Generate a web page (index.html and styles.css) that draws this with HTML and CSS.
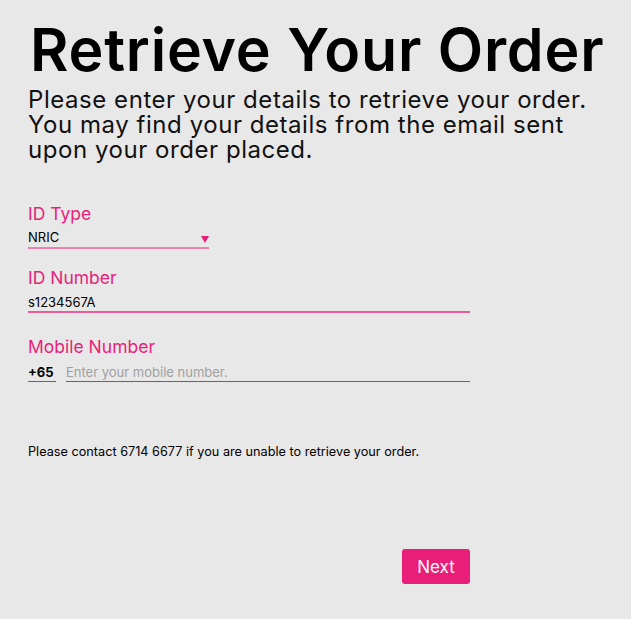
FILE: index.html
```html
<!DOCTYPE html>
<html lang="en">
<head>
<meta charset="utf-8">
<title>Retrieve Your Order</title>
<link rel="stylesheet" href="styles.css">
</head>
<body>
<main class="page">
  <h1 class="title">Retrieve Your Order</h1>
  <p class="intro">Please enter your details to retrieve your order.<br>You may find your details from the email sent<br>upon your order placed.</p>

  <form class="form">
    <div class="field field-type">
      <label class="label">ID Type</label>
      <div class="select">
        <span class="select-value">NRIC</span>
        <svg class="caret" width="8" height="7" viewBox="0 0 8 7"><path d="M0 0H8L4 7Z" fill="#e91e78"/></svg>
      </div>
    </div>

    <div class="field field-number">
      <label class="label">ID Number</label>
      <div class="input input-strong">s1234567A</div>
    </div>

    <div class="field field-mobile">
      <label class="label">Mobile Number</label>
      <div class="mobile-row">
        <span class="prefix">+65</span>
        <span class="input input-mobile placeholder">Enter your mobile number.</span>
      </div>
    </div>

    <p class="contact">Please contact 6714 6677 if you are unable to retrieve your order.</p>

    <div class="actions">
      <button type="button" class="btn">Next</button>
    </div>
  </form>
</main>
</body>
</html>
```

FILE: styles.css
```css
html, body {
  margin: 0;
  padding: 0;
  background: #ffffff;
}

body {
  font-family: "Inter", "Lato", "Liberation Sans", sans-serif;
  color: #111;
}

.page {
  width: 603px;
  min-height: 599px;
  background: #e8e8e8;
  padding: 20px 0 0 28px;
  box-sizing: content-box;
}

.title {
  margin: 0 0 0 2px;
  font-size: 59px;
  line-height: 60px;
  font-weight: 600;
  color: #000;
  letter-spacing: 0.8px;
  white-space: nowrap;
}

.intro {
  margin: 7px 0 0 0;
  font-size: 24px;
  line-height: 25px;
  letter-spacing: 0.55px;
  color: #111;
  white-space: nowrap;
}

.form {
  width: 442px;
  margin-top: 41px;
}

.label {
  display: block;
  font-size: 17.5px;
  line-height: 22px;
  color: #e91e78;
}

.select {
  width: 181px;
  display: flex;
  align-items: center;
  padding: 4px 0 2px;
  border-bottom: 2px solid #ef7fac;
  font-size: 13px;
  line-height: 16px;
  color: #000;
}

.caret {
  margin-left: auto;
  margin-top: 5px;
}

.field-number {
  margin-top: 18px;
}

.input {
  font-size: 13px;
  line-height: 16px;
  color: #000;
}

.input-strong {
  padding: 5px 0 1px;
  border-bottom: 2px solid #ec5b98;
}

.field-mobile {
  margin-top: 23px;
}

.mobile-row {
  display: flex;
  gap: 10px;
  padding-top: 6px;
}

.prefix {
  width: 28px;
  font-size: 13px;
  line-height: 16px;
  font-weight: 700;
  color: #000;
  padding-bottom: 1px;
  border-bottom: 1px solid #e91e78;
}

.input-mobile {
  flex: 1;
  padding-bottom: 1px;
  border-bottom: 1px solid #e91e78;
}

.placeholder {
  color: #a0a0a0;
}

.contact {
  margin: 62px 0 0 0;
  font-size: 12.7px;
  line-height: 16px;
  color: #000;
  white-space: nowrap;
}

.actions {
  display: flex;
  justify-content: flex-end;
  margin-top: 89px;
}

.btn {
  width: 68px;
  height: 35px;
  border: 0;
  border-radius: 3px;
  background: #e91e78;
  color: #fff;
  font-family: inherit;
  font-size: 17px;
  padding: 0;
  cursor: pointer;
}
```
